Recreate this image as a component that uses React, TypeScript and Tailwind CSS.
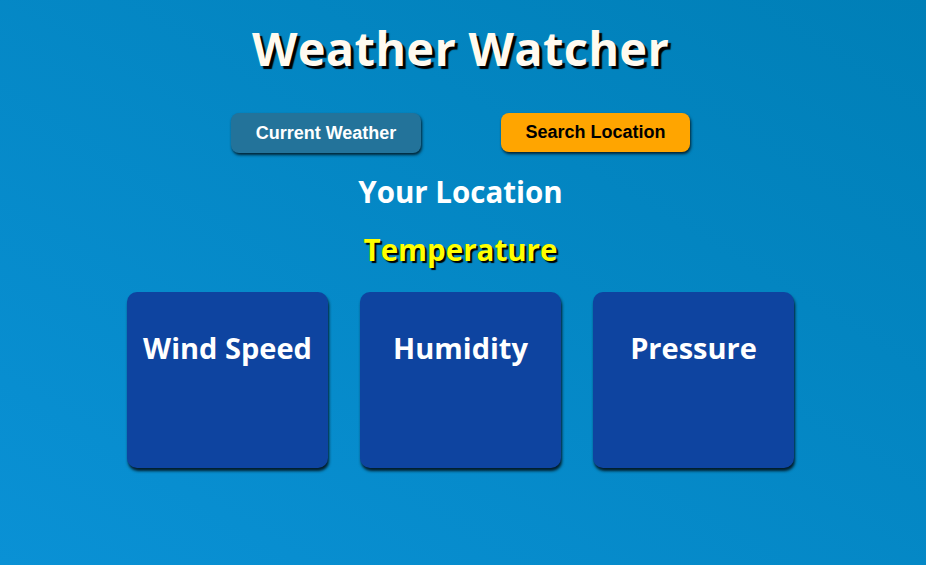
export default function App() {
  const cards = ["Wind Speed", "Humidity", "Pressure"];

  return (
    <div className="min-h-[565px] w-full pr-[5px] bg-gradient-to-tr from-[#0a91d5] to-[#007fb7] font-['Open_Sans',sans-serif] flex flex-col items-center">
      <h1 className="mt-[18px] text-[47px] leading-[60px] font-bold text-[#fffaf0] [text-shadow:3px_3px_1px_#000] tracking-[0.3px]">
        Weather Watcher
      </h1>

      <div className="mt-[35px] flex gap-[80px] font-['Liberation_Sans',Arial,sans-serif]">
        <button className="w-[190px] h-[40px] rounded-[8px] bg-[#23739a] text-white text-[18px] font-bold shadow-[1px_2px_3px_rgba(0,0,0,0.75)]">
          Current Weather
        </button>
        <button className="w-[189px] h-[39px] rounded-[8px] bg-[#ffa500] text-black text-[18px] font-bold shadow-[1px_2px_3px_rgba(0,0,0,0.75)]">
          Search Location
        </button>
      </div>

      <h2 className="mt-[19px] text-[29.5px] leading-[40px] font-bold text-white">
        Your Location
      </h2>

      <h3 className="mt-[18px] text-[29.5px] leading-[40px] font-bold text-[#ffff00] [text-shadow:2px_2px_1px_#000]">
        Temperature
      </h3>

      <div className="mt-[22px] flex gap-[32px]">
        {cards.map((c) => (
          <div
            key={c}
            className="w-[201px] h-[176px] rounded-[10px] bg-[#0e44a0] shadow-[1px_3px_3px_rgba(0,0,0,0.8)] flex justify-center pt-[36px]"
          >
            <span className="text-[29px] leading-[40px] font-bold text-white">{c}</span>
          </div>
        ))}
      </div>
    </div>
  );
}
